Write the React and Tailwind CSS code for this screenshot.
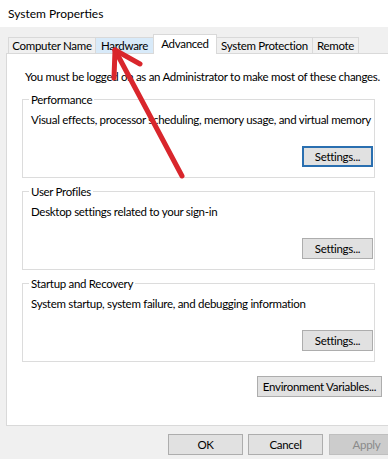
import React from 'react';

const tabs = [
  { label: 'Computer Name', w: 'w-[88px]', state: 'idle' },
  { label: 'Hardware', w: 'w-[59px]', state: 'hover' },
  { label: 'Advanced', w: 'w-[64px]', state: 'active' },
  { label: 'System Protection', w: 'w-[97px]', state: 'idle' },
  { label: 'Remote', w: 'w-[47px]', state: 'idle' },
];

const groups = [
  { title: 'Performance', desc: 'Visual effects, processor scheduling, memory usage, and virtual memory', focused: true },
  { title: 'User Profiles', desc: 'Desktop settings related to your sign-in' },
  { title: 'Startup and Recovery', desc: 'System startup, system failure, and debugging information' },
];

function Tab({ tab, first }) {
  const base = 'flex justify-center whitespace-nowrap border border-b-0 border-[#d9d9d9] ' + tab.w + (first ? '' : ' -ml-px');
  if (tab.state === 'active') {
    return <div className={base + ' relative z-10 h-[20px] -mb-px bg-white pt-[1px]'}>{tab.label}</div>;
  }
  if (tab.state === 'hover') {
    return <div className={base + ' h-[16px] bg-[#d8eaf9]'}>{tab.label}</div>;
  }
  return <div className={base + ' h-[16px] bg-[#f0f0f0]'}>{tab.label}</div>;
}

function WinButton({ children, w = 'w-[71px]', focused, disabled }) {
  let cls = 'h-[21px] flex items-center justify-center whitespace-nowrap border ' + w;
  if (focused) cls += ' border-2 border-[#2a6fb0] bg-[#e1e1e1]';
  else if (disabled) cls += ' border-[#bfbfbf] bg-[#cccccc] text-[#8a8a8a]';
  else cls += ' border-[#adadad] bg-[#e1e1e1]';
  return <button type="button" className={cls}>{children}</button>;
}

function Group({ g }) {
  return (
    <fieldset className="min-w-0 w-[353px] border border-[#dcdcdc] pl-[8px] pr-[1px] pb-[10px] mb-[6px]">
      <legend className="px-[2px] -ml-[2px] whitespace-nowrap">{g.title}</legend>
      <p className="mt-[5px] whitespace-nowrap">{g.desc}</p>
      <div className="mt-[19px] flex justify-end">
        <WinButton focused={g.focused}>Settings...</WinButton>
      </div>
    </fieldset>
  );
}

export default function App() {
  return (
    <div className="relative w-[388px] h-[459px] overflow-hidden bg-[#f0f0f0] text-[11.5px] tracking-[-0.3px] leading-[15px] text-black font-['Lato','Noto_Sans',sans-serif]">
      <div className="h-[27px] bg-white flex items-center pl-[8px] text-[12px] tracking-normal">System Properties</div>

      <div className="mt-[7px] ml-[8px] h-[19px] flex items-end">
        {tabs.map((t, i) => <Tab key={t.label} tab={t} first={i === 0} />)}
      </div>

      <div className="ml-[6px] w-[390px] h-[373px] border border-[#d9d9d9] bg-white pt-[15px] pl-[15px]">
        <p className="ml-[3px] mb-[8px] whitespace-nowrap">You must be logged on as an Administrator to make most of these changes.</p>
        {groups.map(g => <Group key={g.title} g={g} />)}
        <div className="mt-[14px] ml-[235px]">
          <WinButton w="w-[125px]">Environment Variables...</WinButton>
        </div>
      </div>

      <div className="mt-[8px] flex">
        <div className="ml-[168px]"><WinButton w="w-[75px]">OK</WinButton></div>
        <div className="ml-[5px]"><WinButton w="w-[75px]">Cancel</WinButton></div>
        <div className="ml-[6px]"><WinButton w="w-[75px]" disabled>Apply</WinButton></div>
      </div>

      <svg className="absolute left-0 top-0 pointer-events-none" width="388" height="459">
        <g stroke="#d9262c" strokeWidth="5" strokeLinecap="round" strokeLinejoin="round" fill="none">
          <line x1="115" y1="50" x2="182" y2="176" />
          <line x1="115" y1="50" x2="140" y2="64" />
          <line x1="115" y1="50" x2="114" y2="78" />
        </g>
      </svg>
    </div>
  );
}
